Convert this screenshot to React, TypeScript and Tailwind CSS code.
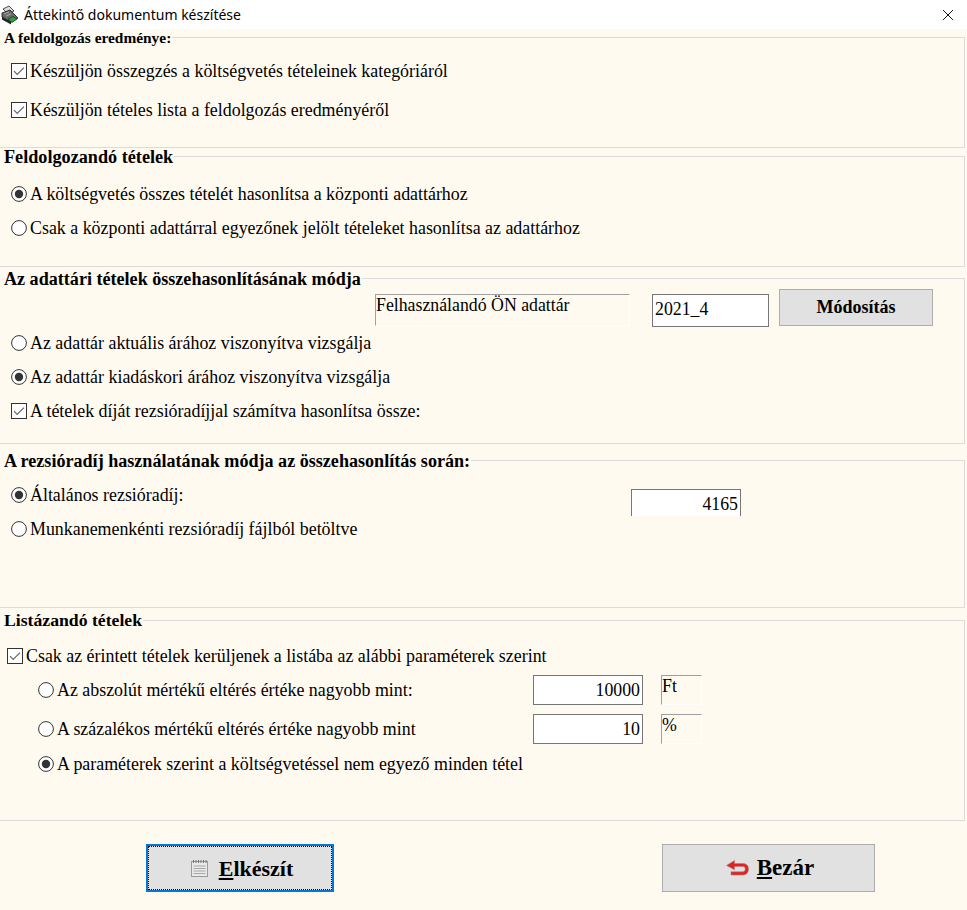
import { ReactNode } from 'react';

// ── Icons ────────────────────────────────────────────────────────────────
const IconCheck = () => (
  <svg viewBox="0 0 16 16" className="w-[16px] h-[16px] shrink-0">
    <rect x="0.5" y="0.5" width="15" height="15" fill="#fff" stroke="#333" />
    <path d="M3 8.2l3.2 3.2L13 4.6" fill="none" stroke="#666" strokeWidth="1.2" />
  </svg>
);

const IconRadio = ({ on }: { on: boolean }) => (
  <svg viewBox="0 0 16 16" className="w-[16px] h-[16px] shrink-0">
    <circle cx="8" cy="8" r="7.4" fill="#fff" stroke="#333" />
    {on && <circle cx="8" cy="8" r="4.2" fill="#333" />}
  </svg>
);

const IconApp = () => (
  <svg viewBox="0 0 18 20" className="w-[18px] h-[20px] shrink-0">
    <path d="M2 4l6-3 5 5-6 3z" fill="#dcdcdc" stroke="#222" strokeWidth="0.8" />
    <path d="M1 8l8-3 8 8-7 4-9-5z" fill="#6a6a6a" stroke="#111" strokeWidth="0.8" />
    <path d="M1 12l9 5v2.5l-9-5z" fill="#222" />
    <path d="M7 14l5-2.5 4 2.5-5 3.5z" fill="#2e9e3f" stroke="#0b3b12" strokeWidth="0.7" />
    <path d="M3 9l5-2M5 11l5-2" stroke="#bbb" strokeWidth="0.8" />
  </svg>
);

const IconClose = () => (
  <svg viewBox="0 0 12 12" className="w-[12px] h-[12px]">
    <path d="M1 1l10 10M11 1L1 11" stroke="#111" strokeWidth="1" />
  </svg>
);

const IconNotepad = () => (
  <svg viewBox="0 0 17 17" className="w-[17px] h-[17px] shrink-0">
    <rect x="0.5" y="1.5" width="16" height="15" fill="#e8e8e8" stroke="#9a9a9a" />
    <path d="M2.5 0v3M5 0v3M7.5 0v3M10 0v3M12.5 0v3M15 0v3" stroke="#777" strokeWidth="1" />
    <path d="M2.5 6h12M2.5 8.5h12M2.5 11h12M2.5 13.5h12" stroke="#a8a8a8" strokeWidth="1" />
  </svg>
);

const IconReturn = () => (
  <svg viewBox="0 0 23 17" className="w-[23px] h-[17px] shrink-0">
    <path d="M0.5 5.5L8.5 0.5v3h8.5c3.5 0 5.5 2.3 5.5 5.5S20.5 15 17 15H5v-3.2h11.5c1.7 0 2.7-1 2.7-2.8s-1-2.4-2.7-2.4H8.5v3.2z" fill="#e8201c" stroke="#9a8a8a" strokeWidth="0.6" />
  </svg>
);

// ── Form pieces ──────────────────────────────────────────────────────────
const Group = ({ title, titleClass, className, bodyClass, children }: { title: string; titleClass: string; className: string; bodyClass: string; children: ReactNode }) => (
  <section className={`w-[965px] border border-l-0 border-[#dcdcdc] ${className}`}>
    <h2 className={`w-fit h-[18px] -mt-[9px] pl-[4px] pr-[1px] bg-[#fffaf0] font-bold leading-[18px] ${titleClass}`}>
      {title}
    </h2>
    <div className={bodyClass}>{children}</div>
  </section>
);

const Option = ({ icon, className, children }: { icon: ReactNode; className?: string; children: ReactNode }) => (
  <div className={`flex items-center gap-[3px] h-[20px] text-[17.9px] leading-[20px] whitespace-nowrap ${className ?? ''}`}>
    {icon}
    <span>{children}</span>
  </div>
);

const Field = ({ className, children }: { className: string; children: ReactNode }) => (
  <div className={`bg-white border border-[#767676] text-[17.8px] leading-[28px] ${className}`}>{children}</div>
);

const Caption = ({ className, children }: { className: string; children: ReactNode }) => (
  <div className={`border border-t-[#a0a0a0] border-l-[#a0a0a0] border-r-white border-b-white text-[17.8px] ${className}`}>{children}</div>
);

export default function App() {
  return (
    <div className="w-[967px] h-[910px] overflow-hidden bg-[#fffaf0] text-black font-['Liberation_Serif',serif]">
      {/* Title bar */}
      <header className="h-[29px] bg-white flex items-center justify-between pl-[1px] pr-[13px]">
        <div className="flex items-center gap-[5px]">
          <IconApp />
          <span className="font-['Noto_Sans',sans-serif] text-[14px]">Áttekintő dokumentum készítése</span>
        </div>
        <IconClose />
      </header>

      {/* A feldolgozás eredménye */}
      <Group title="A feldolgozás eredménye:" titleClass="text-[15.4px]" className="mt-[8px] h-[111px]" bodyClass="pl-[11px] pt-[14px]">
        <Option icon={<IconCheck />}>Készüljön összegzés a költségvetés tételeinek kategóriáról</Option>
        <Option icon={<IconCheck />} className="mt-[19px]">Készüljön tételes lista a feldolgozás eredményéről</Option>
      </Group>

      {/* Feldolgozandó tételek */}
      <Group title="Feldolgozandó tételek" titleClass="text-[18.2px]" className="mt-[8px] h-[111px]" bodyClass="pl-[11px] pt-[18px]">
        <Option icon={<IconRadio on />}>A költségvetés összes tételét hasonlítsa a központi adattárhoz</Option>
        <Option icon={<IconRadio on={false} />} className="mt-[14px]">Csak a központi adattárral egyezőnek jelölt tételeket hasonlítsa az adattárhoz</Option>
      </Group>

      {/* Az adattári tételek */}
      <Group title="Az adattári tételek összehasonlításának módja" titleClass="text-[18.1px]" className="mt-[11px] h-[166px]" bodyClass="pl-[11px] pt-[1px]">
        <div className="flex items-start h-[40px] ml-[364px]">
          <Caption className="w-[255px] h-[32px] mt-[5px] leading-[20px]">Felhasználandó ÖN adattár</Caption>
          <Field className="w-[117px] h-[33px] mt-[5px] ml-[22px] pl-[2px]">2021_4</Field>
          <button className="w-[154px] h-[37px] ml-[10px] bg-[#e1e1e1] border border-[#adadad] font-bold text-[18px]">Módosítás</button>
        </div>
        <Option icon={<IconRadio on={false} />} className="mt-[4px]">Az adattár aktuális árához viszonyítva vizsgálja</Option>
        <Option icon={<IconRadio on />} className="mt-[14px]">Az adattár kiadáskori árához viszonyítva vizsgálja</Option>
        <Option icon={<IconCheck />} className="mt-[14px]">A tételek díját rezsióradíjjal számítva hasonlítsa össze:</Option>
      </Group>

      {/* A rezsióradíj */}
      <Group title="A rezsióradíj használatának módja az összehasonlítás során:" titleClass="text-[18.1px]" className="mt-[16px] h-[148px]" bodyClass="pl-[11px]">
        <div className="flex items-start h-[47px]">
          <Option icon={<IconRadio on />} className="mt-[15px] w-[620px]">Általános rezsióradíj:</Option>
          <div className="w-[110px] h-[27px] mt-[19px] bg-white border border-b-0 border-[#767676] text-[17.8px] leading-[28px] text-right pr-[2px]">4165</div>
        </div>
        <Option icon={<IconRadio on={false} />} className="mt-[2px]">Munkanemenkénti rezsióradíj fájlból betöltve</Option>
      </Group>

      {/* Listázandó tételek */}
      <Group title="Listázandó tételek" titleClass="text-[17.7px] -translate-y-px" className="mt-[12px] h-[201px]" bodyClass="pl-[7px]">
        <Option icon={<IconCheck />} className="mt-[16px]">Csak az érintett tételek kerüljenek a listába az alábbi paraméterek szerint</Option>
        <div className="flex items-center h-[30px] mt-[9px] pl-[31px]">
          <Option icon={<IconRadio on={false} />} className="w-[495px]">Az abszolút mértékű eltérés értéke nagyobb mint:</Option>
          <Field className="w-[110px] h-[30px] text-right pr-[2px]">10000</Field>
          <Caption className="w-[41px] h-[30px] ml-[18px] leading-[20px]">Ft</Caption>
        </div>
        <div className="flex items-center h-[30px] mt-[9px] pl-[31px]">
          <Option icon={<IconRadio on={false} />} className="w-[495px]">A százalékos mértékű eltérés értéke nagyobb mint</Option>
          <Field className="w-[110px] h-[30px] text-right pr-[2px]">10</Field>
          <Caption className="w-[41px] h-[30px] ml-[18px] leading-[20px]">%</Caption>
        </div>
        <div className="pl-[31px] mt-[10px]">
          <Option icon={<IconRadio on />}>A paraméterek szerint a költségvetéssel nem egyező minden tétel</Option>
        </div>
      </Group>

      {/* Gombok */}
      <footer className="flex items-start mt-[23px] pl-[146px]">
        <button className="w-[188px] h-[48px] pl-[4px] flex items-center justify-center gap-[11px] bg-[#e1e1e1] border-2 border-[#0078d7] outline-1 outline-dotted outline-black -outline-offset-3 font-bold text-[22px]">
          <IconNotepad />
          <span><span className="underline">E</span>lkészít</span>
        </button>
        <button className="w-[213px] h-[48px] ml-[328px] pl-[3px] flex items-center justify-center gap-[8px] bg-[#e1e1e1] border border-[#adadad] font-bold text-[23px]">
          <IconReturn />
          <span><span className="underline">B</span>ezár</span>
        </button>
      </footer>
    </div>
  );
}
